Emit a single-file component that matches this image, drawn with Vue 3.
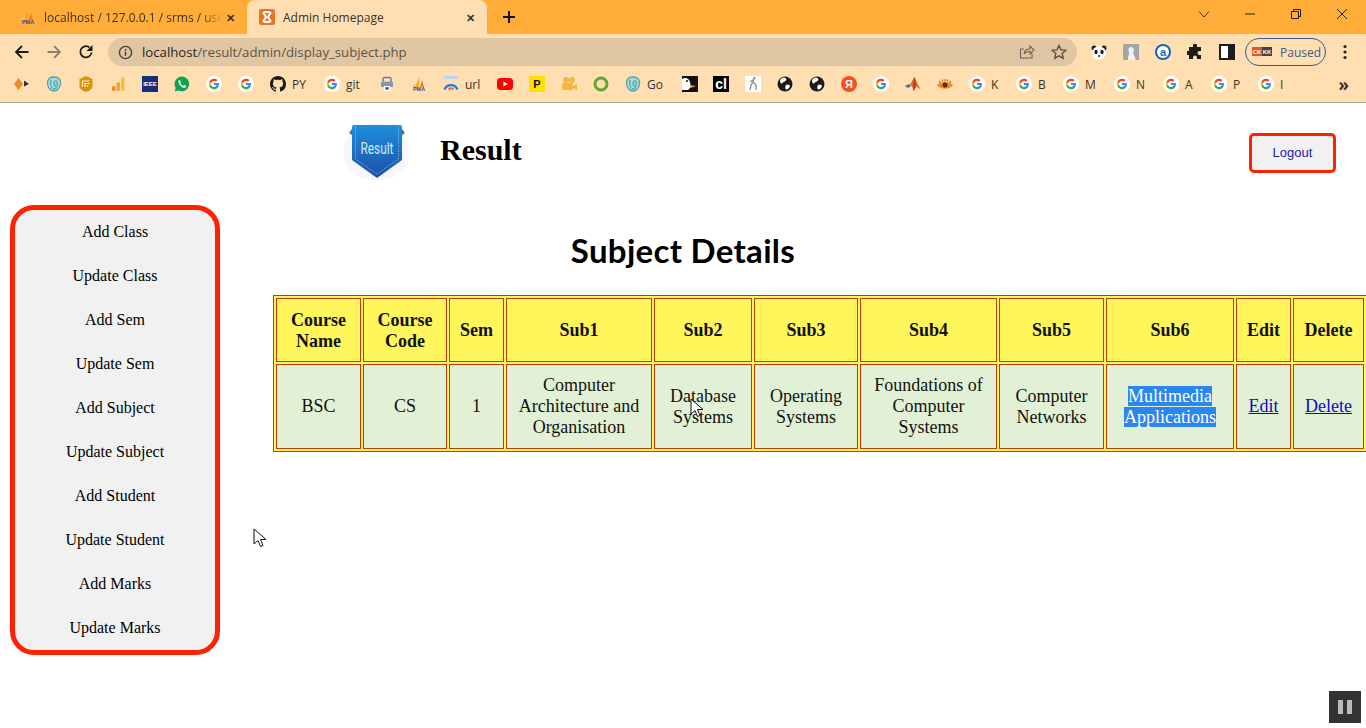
<script setup>
// w is the full width of a labelled bookmark, plain ones are 32px
const bookmarks = [
  { icon: 'diamond' }, { icon: 'spiral' }, { icon: 'analytics' }, { icon: 'bars' }, { icon: 'ieee', text: 'IEEE' },
  { icon: 'whatsapp' }, { icon: 'google' }, { icon: 'google' }, { icon: 'github', label: 'PY', w: 54 },
  { icon: 'google', label: 'git', w: 55 }, { icon: 'lock' }, { icon: 'pma', text: 'PMA' }, { icon: 'wifi', label: 'url', w: 54 },
  { icon: 'youtube' }, { icon: 'yellowp', text: 'P' }, { icon: 'camera' }, { icon: 'ring' },
  { icon: 'spiral', label: 'Go', w: 57 }, { icon: 'duck', w: 31 }, { icon: 'cl', text: 'cl' }, { icon: 'figure' },
  { icon: 'globe' }, { icon: 'globe' }, { icon: 'yandex', text: 'Я' }, { icon: 'google' }, { icon: 'matlab' },
  { icon: 'eye' }, { icon: 'google', label: 'K', w: 47 }, { icon: 'google', label: 'B', w: 47 },
  { icon: 'google', label: 'M', w: 51 }, { icon: 'google', label: 'N', w: 49 }, { icon: 'google', label: 'A', w: 48 },
  { icon: 'google', label: 'P', w: 47 }, { icon: 'google', label: 'I', w: 40 }
]

const menu = [
  'Add Class', 'Update Class', 'Add Sem', 'Update Sem', 'Add Subject',
  'Update Subject', 'Add Student', 'Update Student', 'Add Marks', 'Update Marks'
]

// column widths including the cell border
const columns = [
  { title: 'Course Name', width: 85 },
  { title: 'Course Code', width: 84 },
  { title: 'Sem', width: 55 },
  { title: 'Sub1', width: 146 },
  { title: 'Sub2', width: 98 },
  { title: 'Sub3', width: 104 },
  { title: 'Sub4', width: 137 },
  { title: 'Sub5', width: 105 },
  { title: 'Sub6', width: 128 },
  { title: 'Edit', width: 55 },
  { title: 'Delete', width: 71 }
]

const plainCells = [
  'BSC', 'CS', '1', 'Computer Architecture and Organisation', 'Database Systems',
  'Operating Systems', 'Foundations of Computer Systems', 'Computer Networks'
]
</script>

<template>
  <div class="screen">
    <svg class="symbols" aria-hidden="true">
      <symbol id="google" viewBox="0 0 16 16">
        <circle cx="8" cy="8" r="8" fill="#fff"/>
        <g transform="translate(2.4 2.4) scale(.467)">
          <path fill="#4285f4" d="M22.56 12.25c0-.78-.07-1.53-.2-2.25H12v4.26h5.92c-.26 1.37-1.04 2.53-2.21 3.31v2.77h3.57c2.08-1.92 3.28-4.74 3.28-8.09z"/>
          <path fill="#34a853" d="M12 23c2.97 0 5.46-.98 7.28-2.66l-3.57-2.77c-.98.66-2.23 1.06-3.71 1.06-2.86 0-5.29-1.93-6.16-4.53H2.18v2.84C3.99 20.53 7.7 23 12 23z"/>
          <path fill="#fbbc05" d="M5.84 14.09c-.22-.66-.35-1.36-.35-2.09s.13-1.43.35-2.09V7.07H2.18C1.43 8.55 1 10.22 1 12s.43 3.45 1.18 4.93l2.85-2.22.81-.62z"/>
          <path fill="#ea4335" d="M12 5.38c1.62 0 3.06.56 4.21 1.64l3.15-3.15C17.45 2.09 14.97 1 12 1 7.7 1 3.99 3.47 2.18 7.07l3.66 2.84c.87-2.6 3.3-4.53 6.16-4.53z"/>
        </g>
      </symbol>
      <symbol id="github" viewBox="0 0 16 16">
        <path fill="#1b1b1b" d="M8 0C3.58 0 0 3.58 0 8c0 3.54 2.29 6.53 5.47 7.59.4.07.55-.17.55-.38 0-.19-.01-.82-.01-1.49-2.01.37-2.53-.49-2.69-.94-.09-.23-.48-.94-.82-1.13-.28-.15-.68-.52-.01-.53.63-.01 1.08.58 1.23.82.72 1.21 1.87.87 2.33.66.07-.52.28-.87.51-1.07-1.78-.2-3.64-.89-3.64-3.95 0-.87.31-1.59.82-2.15-.08-.2-.36-1.02.08-2.12 0 0 .67-.21 2.2.82.64-.18 1.32-.27 2-.27.68 0 1.36.09 2 .27 1.53-1.04 2.2-.82 2.2-.82.44 1.1.16 1.92.08 2.12.51.56.82 1.27.82 2.15 0 3.07-1.87 3.75-3.65 3.95.29.25.54.73.54 1.48 0 1.07-.01 1.93-.01 2.2 0 .21.15.46.55.38A8.013 8.013 0 0016 8c0-4.42-3.58-8-8-8z"/>
      </symbol>
      <symbol id="diamond" viewBox="0 0 16 16">
        <path fill="#f08a24" d="M4.5 2 9 8l-4.500 6L0 8z"/>
        <path fill="#263238" d="M10 4.500 15 8l-5 2.500z"/>
      </symbol>
      <symbol id="spiral" viewBox="0 0 16 16">
        <path fill="#a9dccf" stroke="#4fa6b0" stroke-width="1.300" d="M8 1C3 1 1 4 1.500 8S5 15 8 15s6-3 6.500-7S13 1 8 1z"/>
        <path fill="none" stroke="#4fa6b0" stroke-width="1.300" d="M5 4c-1 4 0 8 3 9 3-1 4-4 3-7-1-2-3-1-3 1s1 3 2 3"/>
      </symbol>
      <symbol id="analytics" viewBox="0 0 16 16">
        <path fill="#d9930f" d="M8 0l6.500 3v7c0 3-3 5-6.500 6-3.500-1-6.500-3-6.500-6V3z"/>
        <path fill="none" stroke="#fff3cc" stroke-width="1.200" d="M4.500 11V5h7M7 11V7.500h4.500M9.500 11V9.500"/>
      </symbol>
      <symbol id="bars" viewBox="0 0 16 16">
        <rect x="2" y="10" width="3.500" height="5" rx="1.500" fill="#f08a24"/>
        <rect x="6.500" y="6" width="3.500" height="9" rx="1.500" fill="#f2a33a"/>
        <rect x="11" y="1" width="3.500" height="14" rx="1.500" fill="#f7bd3b"/>
      </symbol>
      <symbol id="ieee" viewBox="0 0 16 16">
        <rect width="16" height="16" fill="#12307c"/>
      </symbol>
      <symbol id="whatsapp" viewBox="0 0 16 16">
        <path fill="#0fa34e" d="M8 .5a7.400 7.400 0 0 0-6.300 11.300L.6 15.500l3.800-1A7.400 7.400 0 1 0 8 .5z"/>
        <path fill="#fff" d="M5.500 4c-.6.300-1.200 1.200-1 2.300.4 2 2.800 4.900 5.200 5.500 1.100.3 2-.3 2.300-1 .2-.5.100-.9-.1-1l-1.500-.8c-.3-.1-.5 0-.7.300l-.5.600c-1.300-.4-2.400-1.500-3-2.800l.5-.6c.2-.2.200-.4.100-.6L6.100 4.200C6 4 5.800 3.900 5.500 4z"/>
      </symbol>
      <symbol id="lock" viewBox="0 0 16 16">
        <rect x="4" y="1.500" width="8" height="5" rx="1.500" fill="none" stroke="#667a99" stroke-width="1.400"/>
        <rect x="2" y="6" width="12" height="5" fill="#8696b3"/>
        <rect x="5" y="10" width="6" height="5" fill="#fff"/>
        <path fill="#333" d="M6.500 11h1l.5 1.500.5-1.500h1v3h-.8v-1.500L8 14l-.7-1.500V14h-.8z"/>
      </symbol>
      <symbol id="pma" viewBox="0 0 16 16">
        <path fill="#f5a51e" d="M4 11 8.500 1 8 11z"/>
        <path fill="#ee7f22" d="M9 11l2-7 2 7z"/>
        <path fill="#f8c06a" d="M1 11l3-4 1 4z"/>
      </symbol>
      <symbol id="wifi" viewBox="0 0 16 16">
        <rect x="1" y="0" width="14" height="3" fill="#bcd4ee"/>
        <path fill="none" stroke="#1f7fe0" stroke-width="2.400" d="M1.500 13.500a7 7 0 0 1 13 0"/>
        <path fill="none" stroke="#f26522" stroke-width="2" d="M5.500 13.500a3 3 0 0 1 5 0"/>
      </symbol>
      <symbol id="youtube" viewBox="0 0 16 16">
        <rect y="2" width="16" height="12" rx="3.500" fill="#f00"/>
        <path fill="#fff" d="M6.500 5.500 11 8l-4.500 2.500z"/>
      </symbol>
      <symbol id="yellowp" viewBox="0 0 16 16">
        <rect width="16" height="16" fill="#ffdf00"/>
      </symbol>
      <symbol id="camera" viewBox="0 0 16 16">
        <circle cx="5" cy="4" r="3" fill="#f4b73e"/>
        <circle cx="11" cy="4" r="3" fill="#f4b73e"/>
        <rect x="1" y="7" width="11" height="7" rx="1" fill="#f4b73e"/>
        <path fill="#f4b73e" d="M12 10l4-2v6l-4-2z"/>
      </symbol>
      <symbol id="ring" viewBox="0 0 16 16">
        <circle cx="8" cy="8" r="6" fill="none" stroke="#5da832" stroke-width="3"/>
      </symbol>
      <symbol id="duck" viewBox="0 0 16 16">
        <rect width="16" height="16" fill="#111"/>
        <path fill="#fff" d="M0 3c3-2 7-1 8 3l1 5-3 3H0z"/>
        <path fill="#f08a24" d="M8 9l6 1-5 2z"/>
        <circle cx="5" cy="5" r="1" fill="#111"/>
      </symbol>
      <symbol id="cl" viewBox="0 0 16 16">
        <rect width="16" height="16" fill="#000"/>
      </symbol>
      <symbol id="figure" viewBox="0 0 16 16">
        <rect width="16" height="16" fill="#fff"/>
        <path fill="none" stroke="#8b8b8b" stroke-width="1.300" d="M9 2 8 6l-2 3-1 5M8 6l3 3 0 5M8 4 5 6"/>
        <circle cx="9.500" cy="2" r="1.200" fill="#999"/>
      </symbol>
      <symbol id="globe" viewBox="0 0 16 16">
        <circle cx="8" cy="8" r="7.500" fill="#1b1b1b"/>
        <path fill="#fff" d="M7 1.500c2 .5 3 1.500 2 3S6 5.500 5.500 7 3 7 3 5s2-3.500 4-3.500zM9 9c2-.5 4 0 4 1s-2 3.500-3.500 3.500S8 10 9 9z"/>
      </symbol>
      <symbol id="yandex" viewBox="0 0 16 16">
        <circle cx="8" cy="8" r="8" fill="#f4511e"/>
      </symbol>
      <symbol id="matlab" viewBox="0 0 16 16">
        <path fill="#3f6fb5" d="M0 10l4-2 2 2-3 2z"/>
        <path fill="#e2662a" d="M5 8c2-1 3-6 4.500-7C11 3 13 11 16 13c-2 0-3.500-1.500-4.500-3-1.500 2-2 4-3 5C8 12 7 10 5 8z"/>
        <path fill="#b8401d" d="M9.500 1c-1 3-1.500 7-1 14 1-1 1.500-3 3-5C10.500 7 10 4 9.500 1z"/>
      </symbol>
      <symbol id="eye" viewBox="0 0 16 16">
        <path fill="#f08a24" d="M0 9c3-4 13-4 16 0-3 5-13 5-16 0z"/>
        <circle cx="8" cy="9" r="2.500" fill="#5f2c00"/>
        <path fill="none" stroke="#d9690f" stroke-width="1.200" d="M2 5l1.500 1.500M5 3.500 6 5.500M8 3v2.500M11 3.500 10 5.500M14 5l-1.500 1.500"/>
      </symbol>
    </svg>

    <div class="tabstrip">
      <div class="tab">
        <span class="icon-box pma">
          <svg class="fav"><use href="#pma"/></svg>
          <span class="icon-text">PMA</span>
        </span>
        <span class="tab-title fade">localhost / 127.0.0.1 / srms / user</span>
        <span class="tab-close">✕</span>
      </div>
      <div class="tab active">
        <svg class="fav" viewBox="0 0 16 16">
          <rect width="16" height="16" rx="2" fill="#e8742a"/>
          <path fill="none" stroke="#fff" stroke-width="2" d="M4 3l3 5-3 5M12 3 9 8l3 5M5 3h6M5 13h6"/>
        </svg>
        <span class="tab-title">Admin Homepage</span>
        <span class="tab-close">✕</span>
      </div>
      <svg class="new-tab" viewBox="0 0 14 14"><path d="M7 1v12M1 7h12" stroke="#111" stroke-width="2"/></svg>
      <div class="win-controls">
        <svg viewBox="0 0 12 12"><path d="M1 3.500l5 5.500 5-5.500" fill="none" stroke="#333" stroke-width="1"/></svg>
        <svg viewBox="0 0 12 12"><path d="M1 6h10" stroke="#222" stroke-width="1"/></svg>
        <svg viewBox="0 0 12 12"><path d="M1.500 3.500h7v7h-7zM3.500 3.500v-2h7v7h-2" fill="none" stroke="#222" stroke-width="1"/></svg>
        <svg viewBox="0 0 12 12"><path d="M1 1l10 10M11 1 1 11" stroke="#222" stroke-width="1"/></svg>
      </div>
    </div>

    <div class="toolbar">
      <svg class="nav" viewBox="0 0 16 16"><path d="M14.500 8H2M8 2 2 8l6 6" fill="none" stroke="#1c1c1c" stroke-width="1.800"/></svg>
      <svg class="nav" viewBox="0 0 16 16"><path d="M1.500 8H14M8 2l6 6-6 6" fill="none" stroke="#8d8172" stroke-width="1.800"/></svg>
      <svg class="nav" viewBox="0 0 16 16">
        <path d="M13.500 8.500A5.600 5.600 0 1 1 11.500 3.500" fill="none" stroke="#1c1c1c" stroke-width="1.800"/>
        <path d="M14.500 1v6h-6z" fill="#1c1c1c"/>
      </svg>
      <div class="urlbar">
        <svg class="info" viewBox="0 0 16 16">
          <circle cx="8" cy="8" r="6.500" fill="none" stroke="#4b4439" stroke-width="1.500"/>
          <path d="M8 7v4.500M8 4.200v1.600" stroke="#4b4439" stroke-width="1.700"/>
        </svg>
        <span class="url"><b>localhost</b>/result/admin/display_subject.php</span>
        <svg class="share" viewBox="0 0 16 16">
          <path d="M13 9.500V14H1.500V5H5M5 10c.5-3.500 3-5 6-5V2l4 4-4 4V7.500c-2.500 0-4.500.5-6 2.500z" fill="none" stroke="#6b6154" stroke-width="1.100"/>
        </svg>
        <svg class="star" viewBox="0 0 16 16">
          <path d="M8 1.500l2 4.400 4.800.5-3.600 3.200 1 4.700L8 11.900l-4.200 2.400 1-4.700L1.200 6.400 6 5.900z" fill="none" stroke="#5a5145" stroke-width="1.400"/>
        </svg>
      </div>
      <div class="extensions">
        <svg viewBox="0 0 16 16">
          <circle cx="3" cy="4" r="2.500" fill="#222"/><circle cx="13" cy="4" r="2.500" fill="#222"/>
          <circle cx="8" cy="9" r="6.800" fill="#fff"/>
          <ellipse cx="5" cy="8" rx="1.700" ry="2.200" fill="#222"/><ellipse cx="11" cy="8" rx="1.700" ry="2.200" fill="#222"/>
          <circle cx="8" cy="12" r="1" fill="#222"/>
        </svg>
        <svg viewBox="0 0 16 16">
          <rect width="16" height="16" fill="#a5a5a5"/>
          <path d="M5 16c0-4 1-6 1.500-7C5 7 5 3 8 3s3.500 4 2 6c.5 1 2 3 2.500 7z" fill="#eef2f5"/>
        </svg>
        <svg viewBox="0 0 16 16">
          <circle cx="8" cy="8" r="8" fill="#1565c0"/>
          <circle cx="8" cy="8" r="6" fill="#fff"/>
          <text x="8" y="11.500" text-anchor="middle" font-family="Liberation Sans, sans-serif" font-size="11" font-weight="700" fill="#1565c0">a</text>
        </svg>
        <svg viewBox="0 0 16 16">
          <path fill="#1c1c1c" d="M6 1.500a2 2 0 0 1 4 0V3h4v4h-1.500a2 2 0 0 0 0 4H14v4h-4v-1.500a2 2 0 0 0-4 0V15H2v-4H.5a2 2 0 0 1 0-4H2V3h4z"/>
        </svg>
        <svg viewBox="0 0 16 16">
          <rect x="1" y="1" width="14" height="14" fill="#fff" stroke="#1c1c1c" stroke-width="2"/>
          <rect x="9" y="1" width="6" height="14" fill="#1c1c1c"/>
        </svg>
      </div>
      <div class="paused">
        <svg class="avatar" viewBox="0 0 20 12">
          <rect width="10" height="9" y="1" fill="#e2562a"/>
          <rect x="10" width="10" height="9" y="1" fill="#444"/>
          <text x="5" y="7.500" text-anchor="middle" font-family="Liberation Sans, sans-serif" font-size="6" font-weight="700" fill="#fff">CK</text>
          <text x="15" y="7.500" text-anchor="middle" font-family="Liberation Sans, sans-serif" font-size="6" font-weight="700" fill="#fff">KK</text>
        </svg>
        <span>Paused</span>
      </div>
      <svg class="dots" viewBox="0 0 4 16"><circle cx="2" cy="2.500" r="1.600"/><circle cx="2" cy="8" r="1.600"/><circle cx="2" cy="13.500" r="1.600"/></svg>
    </div>

    <div class="bookmarks">
      <div v-for="(b, i) in bookmarks" :key="i" class="bookmark" :style="b.w ? { width: b.w + 'px' } : null">
        <span class="icon-box" :class="b.icon">
          <svg class="fav"><use :href="'#' + b.icon"/></svg>
          <span v-if="b.text" class="icon-text">{{ b.text }}</span>
        </span>
        <span v-if="b.label">{{ b.label }}</span>
      </div>
      <span class="more">»</span>
    </div>

    <header class="site-header">
      <svg class="logo" viewBox="0 0 74 60">
        <defs>
          <linearGradient id="shield" x1="0" y1="0" x2="0" y2="1">
            <stop offset="0" stop-color="#1e8fdc"/>
            <stop offset="1" stop-color="#1d4fa6"/>
          </linearGradient>
        </defs>
        <ellipse cx="36.500" cy="30" rx="33.500" ry="28.500" fill="#f7f7f9"/>
        <path d="M9 11 12 7v6zM65 11 62 7v6z" fill="#667"/>
        <path d="M14 3h46a2 2 0 0 1 2 2v33L37 56 12 38V5a2 2 0 0 1 2-2z" fill="url(#shield)"/>
        <path d="M15.500 4v33L37 52l21.500-15V4" fill="none" stroke="#9fd0f2" stroke-width=".6" stroke-dasharray="1.500 1"/>
        <text x="37" y="32" text-anchor="middle" font-family="Roboto, sans-serif" font-size="17" fill="#d3e9f8" textLength="33" lengthAdjust="spacingAndGlyphs">Result</text>
      </svg>
      <h1 class="brand">Result</h1>
      <a class="logout">Logout</a>
    </header>

    <div class="content">
      <nav class="sidebar">
        <a v-for="item in menu" :key="item" class="side-link">{{ item }}</a>
      </nav>
      <main class="main">
        <h2 class="page-title">Subject Details</h2>
        <table class="subjects">
          <colgroup>
            <col v-for="c in columns" :key="c.title" :style="{ width: c.width + 'px' }">
          </colgroup>
          <thead>
            <tr><th v-for="c in columns" :key="c.title">{{ c.title }}</th></tr>
          </thead>
          <tbody>
            <tr>
              <td v-for="text in plainCells" :key="text">{{ text }}</td>
              <td><span class="selected">Multimedia Applications</span></td>
              <td><a class="cell-link">Edit</a></td>
              <td><a class="cell-link">Delete</a></td>
            </tr>
          </tbody>
        </table>
      </main>
    </div>

    <svg class="cursor cursor-a" viewBox="0 0 14 20"><path d="M1 1v15l4-3.500 2.500 6 2.500-1-2.500-6H13z" fill="#fff" stroke="#111" stroke-width="1"/></svg>
    <svg class="cursor cursor-b" viewBox="0 0 14 20"><path d="M1 1v15l4-3.500 2.500 6 2.500-1-2.500-6H13z" fill="#fff" stroke="#111" stroke-width="1"/></svg>
    <div class="pause-badge"><i></i><i></i></div>
  </div>
</template>

<style>
  html, body {
    margin: 0;
    background: #fff;
  }
</style>

<style scoped>
  .screen {
    position: relative;
    height: 728px;
    overflow: hidden;
    background: #fff;
    font-family: "Liberation Serif", serif;
  }
  .symbols {
    position: absolute;
    width: 0;
    height: 0;
  }

  /* browser chrome */
  .tabstrip {
    display: flex;
    align-items: center;
    height: 34px;
    padding-left: 8px;
    background: #ffad38;
    font-family: "Open Sans", sans-serif;
    font-size: 12px;
    color: #3b3226;
  }
  .tab {
    display: flex;
    align-items: center;
    width: 239px;
    height: 34px;
    padding: 0 10px 0 12px;
    box-sizing: border-box;
  }
  .tab.active {
    width: 240px;
    padding: 0 10px 0 12px;
    background: #ffdfb2;
    border-radius: 8px 8px 0 0;
  }
  .fav {
    display: block;
    flex: none;
    width: 16px;
    height: 16px;
  }
  .icon-box {
    position: relative;
    flex: none;
    width: 16px;
    height: 16px;
  }
  .icon-text {
    position: absolute;
    inset: 0;
    display: flex;
    align-items: center;
    justify-content: center;
    font-family: "Liberation Sans", sans-serif;
    font-weight: 700;
    line-height: 1;
  }
  .ieee .icon-text {
    font-size: 6px;
    color: #fff;
  }
  .yellowp .icon-text {
    font-size: 11px;
    color: #111;
  }
  .cl .icon-text {
    font-size: 14px;
    color: #fff;
  }
  .yandex .icon-text {
    font-size: 11px;
    color: #fff;
  }
  .pma .icon-text {
    align-items: flex-end;
    font-size: 5.5px;
    color: #3a4a78;
  }
  .tab-title {
    flex: 1;
    margin-left: 8px;
    overflow: hidden;
    white-space: nowrap;
  }
  .fade {
    -webkit-mask-image: linear-gradient(to right, #000 88%, transparent);
    mask-image: linear-gradient(to right, #000 88%, transparent);
  }
  .tab-close {
    flex: none;
    width: 14px;
    font-size: 11px;
    font-weight: 700;
    text-align: center;
  }
  .new-tab {
    width: 14px;
    height: 14px;
    margin-left: 15px;
  }
  .win-controls {
    display: flex;
    gap: 34px;
    margin-left: auto;
    margin-right: 18px;
    margin-top: -6px;
  }
  .win-controls svg {
    width: 12px;
    height: 12px;
  }

  .toolbar {
    display: flex;
    align-items: center;
    height: 36px;
    padding-left: 14px;
    background: #ffdfb2;
  }
  .nav {
    flex: none;
    width: 16px;
    height: 16px;
    margin-right: 16px;
  }
  .urlbar {
    display: flex;
    align-items: center;
    width: 969px;
    height: 28px;
    margin-left: -2px;
    padding: 0 10px;
    box-sizing: border-box;
    background: #e1c6a3;
    border-radius: 14px;
    font-family: "Open Sans", sans-serif;
    font-size: 13.2px;
    color: #5d5346;
  }
  .info {
    flex: none;
    width: 15px;
    height: 15px;
  }
  .url {
    flex: 1;
    margin-left: 9px;
  }
  .url b {
    font-weight: 400;
    color: #2a2419;
  }
  .share,
  .star {
    flex: none;
    width: 16px;
    height: 16px;
  }
  .star {
    margin-left: 16px;
  }
  .extensions {
    display: flex;
    gap: 16px;
    margin-left: 14px;
  }
  .extensions svg {
    width: 16px;
    height: 16px;
  }
  .paused {
    display: flex;
    align-items: center;
    gap: 8px;
    width: 81px;
    height: 28px;
    margin-left: 10px;
    padding-left: 6px;
    box-sizing: border-box;
    border: 1px solid #3c5a86;
    border-radius: 14px;
    font-family: "Open Sans", sans-serif;
    font-size: 12px;
    color: #3c5a86;
  }
  .avatar {
    width: 20px;
    height: 14px;
  }
  .dots {
    width: 4px;
    height: 16px;
    margin-left: 17px;
    fill: #222;
  }

  .bookmarks {
    display: flex;
    align-items: center;
    height: 28px;
    padding: 0 0 4px 6px;
    background: #ffdfb2;
    border-bottom: 1px solid #b9aa94;
    font-family: "Open Sans", sans-serif;
    font-size: 12px;
    color: #3b3226;
  }
  .bookmark {
    display: flex;
    flex: none;
    align-items: center;
    gap: 6px;
    padding: 0 8px;
    box-sizing: border-box;
  }
  .more {
    margin-left: auto;
    margin-right: 17px;
    font-size: 17px;
    font-weight: 700;
    line-height: 1;
  }

  /* page */
  .site-header {
    display: flex;
    align-items: center;
    height: 102px;
    padding: 0 30px 7px 340px;
    box-sizing: border-box;
  }
  .logo {
    width: 74px;
    height: 60px;
    margin: 3px -4px 0 0;
  }
  .brand {
    margin: 0 0 2px 30px;
    font-size: 30px;
    font-weight: 700;
    color: #000;
  }
  .logout {
    display: flex;
    align-items: center;
    justify-content: center;
    width: 87px;
    height: 40px;
    margin: 4px 0 0 auto;
    box-sizing: border-box;
    background: #f1f1f1;
    border: 3px solid #ff2200;
    border-radius: 5px;
    font-family: "Liberation Sans", sans-serif;
    font-size: 13px;
    color: #1a1aa8;
  }

  .content {
    display: flex;
    align-items: flex-start;
  }
  .sidebar {
    flex: none;
    width: 210px;
    margin-left: 10px;
    box-sizing: border-box;
    background: #f1f1f1;
    border: 5px solid #ff2200;
    border-radius: 24px;
  }
  .side-link {
    display: block;
    height: 44px;
    line-height: 44px;
    text-align: center;
    font-size: 16px;
    color: #000;
  }
  .main {
    width: 1093px;
    margin-left: 53px;
  }
  .page-title {
    height: 90px;
    margin: 0;
    padding: 25px 273px 0 0;
    box-sizing: border-box;
    text-align: center;
    font-family: Lato, sans-serif;
    font-size: 33px;
    font-weight: 700;
    letter-spacing: .3px;
    line-height: 40px;
    color: #000;
  }
  .subjects {
    width: 1092px;
    table-layout: fixed;
    background: #fff65c;
    border: 1px solid #c13a10;
    border-spacing: 2px;
    font-size: 18px;
    line-height: 21px;
    color: #111;
    text-align: center;
  }
  .subjects th,
  .subjects td {
    padding: 0 2px;
    border: 1px solid #c13a10;
    box-sizing: border-box;
  }
  .subjects th {
    height: 64px;
    padding-top: 1px;
    background: #fff65c;
    font-weight: 700;
  }
  .subjects td {
    height: 85px;
    background: #e2f1d5;
  }
  .selected {
    background: #2a86f0;
    color: #fff;
  }
  .cell-link {
    color: #0a0ac8;
    text-decoration: underline;
  }

  /* overlays */
  .cursor {
    position: absolute;
    width: 14px;
    height: 20px;
  }
  .cursor-a {
    left: 253px;
    top: 528px;
  }
  .cursor-b {
    left: 690px;
    top: 398px;
  }
  .pause-badge {
    position: absolute;
    right: 5px;
    bottom: 5px;
    display: flex;
    justify-content: center;
    align-items: center;
    gap: 4px;
    width: 32px;
    height: 32px;
    background: #333;
  }
  .pause-badge i {
    width: 5px;
    height: 14px;
    background: #bbb;
  }
</style>
